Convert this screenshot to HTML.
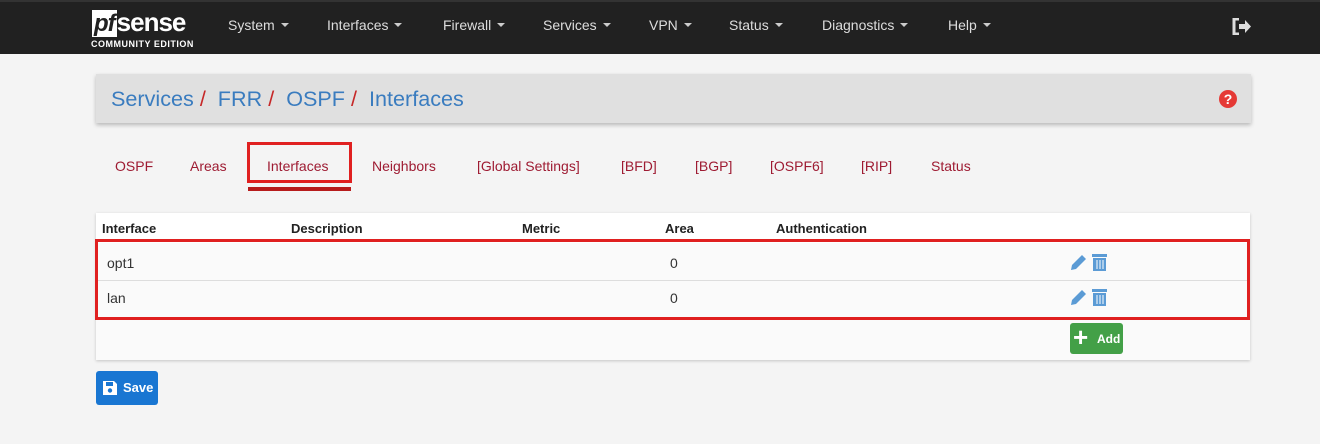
<!DOCTYPE html>
<html><head><style>
*{box-sizing:border-box;margin:0;padding:0}
body{width:1320px;height:444px;background:#f4f4f4;font-family:"Liberation Sans",sans-serif;position:relative;overflow:hidden}
.nav{position:absolute;left:0;top:0;width:1320px;height:54px;background:#212121;border-top:2px solid #333}
.nav span{position:absolute;top:15px;color:#ddd;font-size:14px}
.caret{display:inline-block;border-left:4px solid transparent;border-right:4px solid transparent;border-top:4px solid #ccc;margin-left:6px;vertical-align:3px}
.abs{position:absolute}
.bc{left:96px;top:74px;width:1155px;height:49px;background:#e0e0e0;box-shadow:0 2px 4px rgba(0,0,0,.25)}
.bc .t{position:absolute;left:15px;top:12px;font-size:21.6px;color:#3a7cbf}
.sl{color:#c62828}
.tab{position:absolute;top:158px;font-size:14px;color:#9e1b32}
.tbl{left:96px;top:213px;width:1154px;height:147px;background:#fafafa;box-shadow:0 1px 3px rgba(0,0,0,.2)}
.th{position:absolute;top:221px;font-size:13px;font-weight:bold;color:#222}
.td{position:absolute;font-size:14px;color:#333}
</style></head><body>
<div class="nav">
 <div class="abs" style="left:92px;top:7px;color:#fff;font-size:26px;font-weight:bold;font-style:italic;letter-spacing:-1px;line-height:26px"><span style="position:static;background:#fff;color:#212121;padding:0 2px;font-size:24px;font-style:italic;color:#212121">pf</span><span style="position:static;color:#fff;font-size:26px;font-style:normal">sense</span></div>
 <div class="abs" style="left:91px;top:37px;color:#fff;font-size:9px;font-weight:bold;letter-spacing:.5px">COMMUNITY EDITION</div>
 <span style="left:228px">System<i class="caret"></i></span>
 <span style="left:327px">Interfaces<i class="caret"></i></span>
 <span style="left:443px">Firewall<i class="caret"></i></span>
 <span style="left:543px">Services<i class="caret"></i></span>
 <span style="left:649px">VPN<i class="caret"></i></span>
 <span style="left:729px">Status<i class="caret"></i></span>
 <span style="left:822px">Diagnostics<i class="caret"></i></span>
 <span style="left:948px">Help<i class="caret"></i></span>
 <svg class="abs" style="left:1232px;top:16px" width="20" height="17" viewBox="0 0 20 17"><path d="M7 1H2v15h5" stroke="#ddd" stroke-width="3" fill="none"/><path d="M7 6h6V2l6 6.5-6 6.5v-4H7z" fill="#ddd"/></svg>
</div>
<div class="abs bc"><div class="t">Services <span class="sl">/</span>&nbsp; FRR <span class="sl">/</span>&nbsp; OSPF <span class="sl">/</span>&nbsp; Interfaces</div>
<div class="abs" style="right:14px;top:16px;width:18px;height:18px;border-radius:50%;background:#e53935;color:#fff;font-size:14px;font-weight:bold;text-align:center;line-height:18px">?</div></div>
<span class="tab" style="left:115px">OSPF</span>
<span class="tab" style="left:190px">Areas</span>
<div class="abs" style="left:247px;top:142px;width:105px;height:41px;border:3px solid #e02020"></div>
<span class="tab" style="left:267px">Interfaces</span>
<div class="abs" style="left:248px;top:187px;width:103px;height:4px;background:#b71c1c"></div>
<span class="tab" style="left:372px">Neighbors</span>
<span class="tab" style="left:477px">[Global Settings]</span>
<span class="tab" style="left:621px">[BFD]</span>
<span class="tab" style="left:695px">[BGP]</span>
<span class="tab" style="left:770px">[OSPF6]</span>
<span class="tab" style="left:861px">[RIP]</span>
<span class="tab" style="left:931px">Status</span>
<div class="abs tbl"><div style="height:30px;background:#fff"></div></div>
<span class="th" style="left:102px">Interface</span>
<span class="th" style="left:291px">Description</span>
<span class="th" style="left:522px">Metric</span>
<span class="th" style="left:665px">Area</span>
<span class="th" style="left:776px">Authentication</span>
<div class="abs" style="left:96px;top:280px;width:1154px;height:1px;background:#ddd"></div>
<div class="abs" style="left:96px;top:318px;width:1154px;height:1px;background:#ddd"></div>
<div class="abs" style="left:95px;top:239px;width:1155px;height:81px;border:3px solid #e02020"></div>
<span class="td" style="left:107px;top:255px">opt1</span><span class="td" style="left:670px;top:255px">0</span>
<span class="td" style="left:107px;top:290px">lan</span><span class="td" style="left:670px;top:290px">0</span>
<svg class="abs" style="left:1069px;top:252px" width="40" height="20"><path d="M2 18l1-5 10-10 4 4-10 10z" fill="#5b9bd5"/><rect x="23" y="2" width="15" height="3" fill="#5b9bd5"/><rect x="24" y="6" width="13" height="13" fill="#5b9bd5"/><path d="M28 8v9M31 8v9M34 8v9" stroke="#fff"/></svg>
<svg class="abs" style="left:1069px;top:287px" width="40" height="20"><path d="M2 18l1-5 10-10 4 4-10 10z" fill="#5b9bd5"/><rect x="23" y="2" width="15" height="3" fill="#5b9bd5"/><rect x="24" y="6" width="13" height="13" fill="#5b9bd5"/><path d="M28 8v9M31 8v9M34 8v9" stroke="#fff"/></svg>
<div class="abs" style="left:1070px;top:323px;width:53px;height:31px;background:#43a047;border-radius:3px;color:#fff;font-size:12px;font-weight:bold"><span style="position:absolute;left:3px;top:1px;font-size:26px;line-height:26px">+</span><span style="position:absolute;left:27px;top:9px">Add</span></div>
<div class="abs" style="left:96px;top:371px;width:62px;height:34px;background:#1976d2;border-radius:3px;color:#fff;font-size:13px;font-weight:bold">
<svg class="abs" style="left:6px;top:9px" width="16" height="16" viewBox="0 0 16 16"><path d="M1 1h11l3 3v11H1z" fill="#fff"/><rect x="4" y="2" width="7" height="4" fill="#1976d2"/><circle cx="8" cy="10.5" r="2.2" fill="#1976d2"/></svg>
<span style="position:absolute;left:27px;top:9px">Save</span></div>
</body></html>
